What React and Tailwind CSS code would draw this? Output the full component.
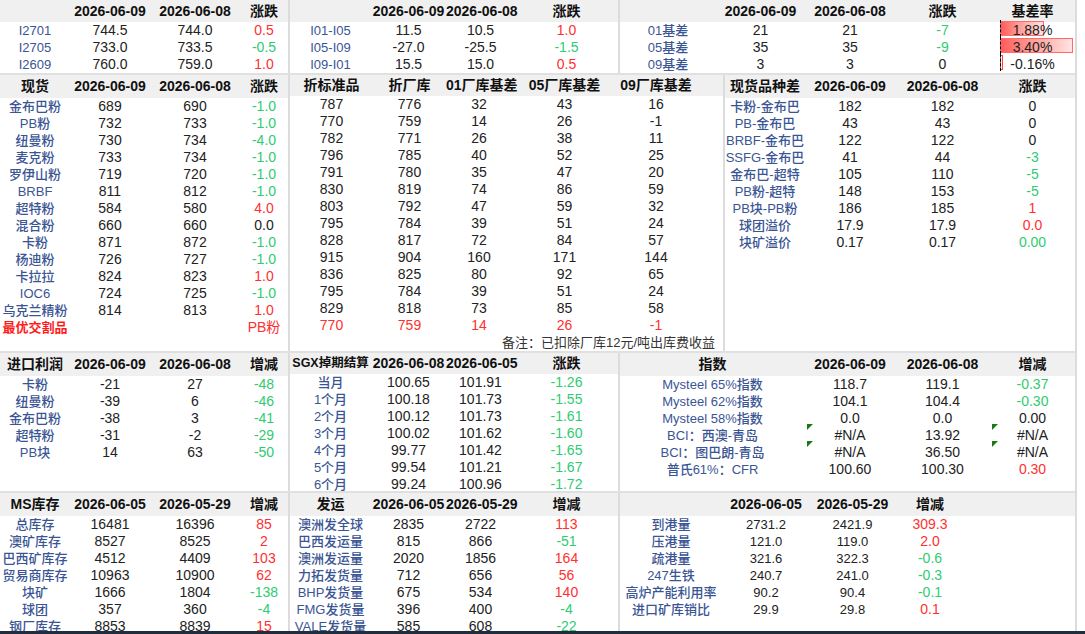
import React from "react";

const F = { fontFamily: '"Liberation Sans","Noto Sans CJK SC",sans-serif' };
const colorCls = { r: "text-[#ff3030]", g: "text-[#2ecc71]", k: "text-[#222]", b: "text-[#3a5594] font-medium text-[13px]", R: "text-[#ff1a1a] font-bold text-[13px]" };

function norm(c) {
  if (c === null || c === undefined) return { t: "" };
  if (typeof c === "object") return c;
  return { t: String(c) };
}
function chg(v) {
  const n = parseFloat(v);
  return { t: v, c: n > 0 ? "r" : n < 0 ? "g" : "k" };
}

function Block({ w, cols, head, rows, sep = true, extra }) {
  return (
    <div className={`relative shrink-0 flex flex-col ${sep ? "border-r-2 border-[#dcdcdc]" : ""}`} style={{ width: w }}>
      <div className="flex h-[23px] items-center bg-[#f0f0f0] font-bold text-[14px] text-[#111]">
        {head.map((h, i) => (
          <div key={i} className={`text-center whitespace-nowrap ${h.length > 6 && !h.startsWith("20") ? "text-[12.5px]" : ""}`} style={{ width: cols[i].w }}>{h}</div>
        ))}
      </div>
      {rows.map((r, ri) => (
        <div key={ri} className="flex h-[17px] items-center text-[14px]">
          {r.map((c0, i) => {
            const c = norm(c0);
            const col = cols[i];
            const cc = c.c || col.c || "k";
            return (
              <div key={i} className={`relative text-center whitespace-nowrap ${colorCls[cc]} ${col.mono ? "font-['Liberation_Mono'] text-[13px]" : ""}`} style={{ width: col.w }}>
                {c.tri && <span className="absolute left-[2px] top-[-1px] w-0 h-0 border-t-[6px] border-r-[6px] border-t-[#1a7a1a] border-r-transparent" />}
                {c.bar !== undefined && (
                  <span className={`absolute top-[1px] left-[10px] h-[15px] ${c.bar > 0 ? "bg-gradient-to-r from-[#ff5a5a] to-[#ffe4e4] border border-[#ff6a6a]" : "border border-[#ff4040] bg-white"}`} style={{ width: Math.max(c.bar, 3) }} />
                )}
                {c.bar !== undefined && <span className="absolute left-[10px] top-0 h-[17px] border-l border-dashed border-black" />}
                <span className="relative">{c.t}</span>
              </div>
            );
          })}
        </div>
      ))}
      {extra}
    </div>
  );
}

const L = [{ w: 70, c: "b" }, { w: 80 }, { w: 90 }, { w: 48 }];
const dA = "2026-06-09", dB = "2026-06-08";

export default function App() {
  return (
    <div style={F} className="w-[1085px] h-[634px] overflow-hidden bg-white text-[#222] relative">
      <div className="w-[1077px] border-r-2 border-[#dcdcdc] h-[631px] overflow-hidden">
        {/* Band 1 */}
        <div className="flex h-[75px] overflow-hidden border-b-2 border-[#e0e0e0]">
          <Block w={290} cols={L} head={["", dA, dB, "涨跌"]} rows={[
            ["I2701", "744.5", "744.0", chg("0.5")],
            ["I2705", "733.0", "733.5", chg("-0.5")],
            ["I2609", "760.0", "759.0", chg("1.0")],
          ]} />
          <Block w={330} cols={[{ w: 81, c: "b" }, { w: 75 }, { w: 69 }, { w: 103 }]} head={["", dA, dB, "涨跌"]} rows={[
            ["I01-I05", "11.5", "10.5", chg("1.0")],
            ["I05-I09", "-27.0", "-25.5", chg("-1.5")],
            ["I09-I01", "15.5", "15.0", chg("0.5")],
          ]} />
          <Block w={455} sep={false} cols={[{ w: 96, c: "b" }, { w: 89 }, { w: 90 }, { w: 95 }, { w: 85 }]} head={["", dA, dB, "涨跌", "基差率"]} rows={[
            ["01基差", "21", "21", chg("-7"), { t: "1.88%", bar: 44 }],
            ["05基差", "35", "35", chg("-9"), { t: "3.40%", bar: 73 }],
            ["09基差", "3", "3", { t: "0", c: "k" }, { t: "-0.16%", bar: -1 }],
          ]} />
        </div>
        {/* Band 2 */}
        <div className="flex h-[278px] overflow-hidden border-b-2 border-[#e0e0e0]">
          <Block w={290} cols={L} head={["现货", dA, dB, "涨跌"]} rows={[
            ["金布巴粉", "689", "690", chg("-1.0")],
            ["PB粉", "732", "733", chg("-1.0")],
            ["纽曼粉", "730", "734", chg("-4.0")],
            ["麦克粉", "733", "734", chg("-1.0")],
            ["罗伊山粉", "719", "720", chg("-1.0")],
            ["BRBF", "811", "812", chg("-1.0")],
            ["超特粉", "584", "580", chg("4.0")],
            ["混合粉", "660", "660", chg("0.0")],
            ["卡粉", "871", "872", chg("-1.0")],
            ["杨迪粉", "726", "727", chg("-1.0")],
            ["卡拉拉", "824", "823", chg("1.0")],
            ["IOC6", "724", "725", chg("-1.0")],
            ["乌克兰精粉", "814", "813", chg("1.0")],
            [{ t: "最优交割品", c: "R" }, "", "", { t: "PB粉", c: "r" }],
          ]} />
          <Block w={435} cols={[{ w: 83 }, { w: 73 }, { w: 66 }, { w: 105 }, { w: 78 }, { w: 28 }]} head={["折标准品", "折厂库", "01厂库基差", "05厂库基差", "09厂库基差", ""]} rows={[
            ["787", "776", "32", "43", "16"],
            ["770", "759", "14", "26", "-1"],
            ["782", "771", "26", "38", "11"],
            ["796", "785", "40", "52", "25"],
            ["791", "780", "35", "47", "20"],
            ["830", "819", "74", "86", "59"],
            ["803", "792", "47", "59", "32"],
            ["795", "784", "39", "51", "24"],
            ["828", "817", "72", "84", "57"],
            ["915", "904", "160", "171", "144"],
            ["836", "825", "80", "92", "65"],
            ["795", "784", "39", "51", "24"],
            ["829", "818", "73", "85", "58"],
            [{ t: "770", c: "r" }, { t: "759", c: "r" }, { t: "14", c: "r" }, { t: "26", c: "r" }, { t: "-1", c: "r" }],
          ]} extra={
            <div className="h-[17px] flex items-center justify-end pr-[8px] text-[13px] text-[#333] font-['Noto_Serif_CJK_SC','Liberation_Serif',serif] ml-[-300px]">备注：已扣除厂库12元/吨出库费收益</div>
          } />
          <Block w={350} sep={false} cols={[{ w: 80, c: "b" }, { w: 90 }, { w: 95 }, { w: 85 }]} head={["现货品种差", dA, dB, "涨跌"]} rows={[
            ["卡粉-金布巴", "182", "182", { t: "0", c: "k" }],
            ["PB-金布巴", "43", "43", { t: "0", c: "k" }],
            ["BRBF-金布巴", "122", "122", { t: "0", c: "k" }],
            ["SSFG-金布巴", "41", "44", chg("-3")],
            ["金布巴-超特", "105", "110", chg("-5")],
            ["PB粉-超特", "148", "153", chg("-5")],
            ["PB块-PB粉", "186", "185", chg("1")],
            ["球团溢价", "17.9", "17.9", { t: "0.0", c: "r" }],
            ["块矿溢价", "0.17", "0.17", { t: "0.00", c: "g" }],
          ]} />
        </div>
        {/* Band 3 */}
        <div className="flex h-[140px] overflow-hidden border-b-2 border-[#e0e0e0]">
          <Block w={290} cols={L} head={["进口利润", dA, dB, "增减"]} rows={[
            ["卡粉", "-21", "27", chg("-48")],
            ["纽曼粉", "-39", "6", chg("-46")],
            ["金布巴粉", "-38", "3", chg("-41")],
            ["超特粉", "-31", "-2", chg("-29")],
            ["PB块", "14", "63", chg("-50")],
          ]} />
          <Block w={330} cols={[{ w: 81, c: "b" }, { w: 75 }, { w: 69 }, { w: 103 }]} head={["SGX掉期结算", "2026-06-08", "2026-06-05", "涨跌"]} rows={[
            ["当月", "100.65", "101.91", chg("-1.26")],
            ["1个月", "100.18", "101.73", chg("-1.55")],
            ["2个月", "100.12", "101.73", chg("-1.61")],
            ["3个月", "100.02", "101.62", chg("-1.60")],
            ["4个月", "99.77", "101.42", chg("-1.65")],
            ["5个月", "99.54", "101.21", chg("-1.67")],
            ["6个月", "99.24", "100.96", chg("-1.72")],
          ]} />
          <Block w={455} sep={false} cols={[{ w: 185, c: "b" }, { w: 90 }, { w: 95 }, { w: 85 }]} head={["指数", dA, dB, "增减"]} rows={[
            ["Mysteel 65%指数", "118.7", "119.1", chg("-0.37")],
            ["Mysteel 62%指数", "104.1", "104.4", chg("-0.30")],
            ["Mysteel 58%指数", "0.0", "0.0", { t: "0.00", c: "k" }],
            ["BCI：西澳-青岛", { t: "#N/A", tri: true }, "13.92", { t: "#N/A", tri: true }],
            ["BCI：图巴朗-青岛", { t: "#N/A", tri: true }, "36.50", { t: "#N/A", tri: true }],
            ["普氏61%：CFR", "100.60", "100.30", { t: "0.30", c: "r" }],
          ]} />
        </div>
        {/* Band 4 */}
        <div className="flex h-[150px] overflow-hidden">
          <Block w={290} cols={L} head={["MS库存", "2026-06-05", "2026-05-29", "增减"]} rows={[
            ["总库存", "16481", "16396", chg("85")],
            ["澳矿库存", "8527", "8525", chg("2")],
            ["巴西矿库存", "4512", "4409", chg("103")],
            ["贸易商库存", "10963", "10900", chg("62")],
            ["块矿", "1666", "1804", chg("-138")],
            ["球团", "357", "360", chg("-4")],
            ["钢厂库存", "8853", "8839", chg("15")],
          ]} />
          <Block w={330} cols={[{ w: 81, c: "b" }, { w: 75 }, { w: 69 }, { w: 103 }]} head={["发运", "2026-06-05", "2026-05-29", "增减"]} rows={[
            ["澳洲发全球", "2835", "2722", chg("113")],
            ["巴西发运量", "815", "866", chg("-51")],
            ["澳洲发运量", "2020", "1856", chg("164")],
            ["力拓发货量", "712", "656", chg("56")],
            ["BHP发货量", "675", "534", chg("140")],
            ["FMG发货量", "396", "400", chg("-4")],
            ["VALE发货量", "585", "608", chg("-22")],
          ]} />
          <Block w={455} sep={false} cols={[{ w: 102, c: "b" }, { w: 88, mono: true }, { w: 85, mono: true }, { w: 70 }, { w: 110 }]} head={["", "2026-06-05", "2026-05-29", "增减", ""]} rows={[
            ["到港量", "2731.2", "2421.9", chg("309.3")],
            ["压港量", "121.0", "119.0", chg("2.0")],
            ["疏港量", "321.6", "322.3", chg("-0.6")],
            ["247生铁", "240.7", "241.0", chg("-0.3")],
            ["高炉产能利用率", "90.2", "90.4", chg("-0.1")],
            ["进口矿库销比", "29.9", "29.8", chg("0.1")],
          ]} />
        </div>
      </div>
      <div className="absolute left-0 right-0 top-[631px] h-[3px] bg-[#1f2d3d]" />
    </div>
  );
}
